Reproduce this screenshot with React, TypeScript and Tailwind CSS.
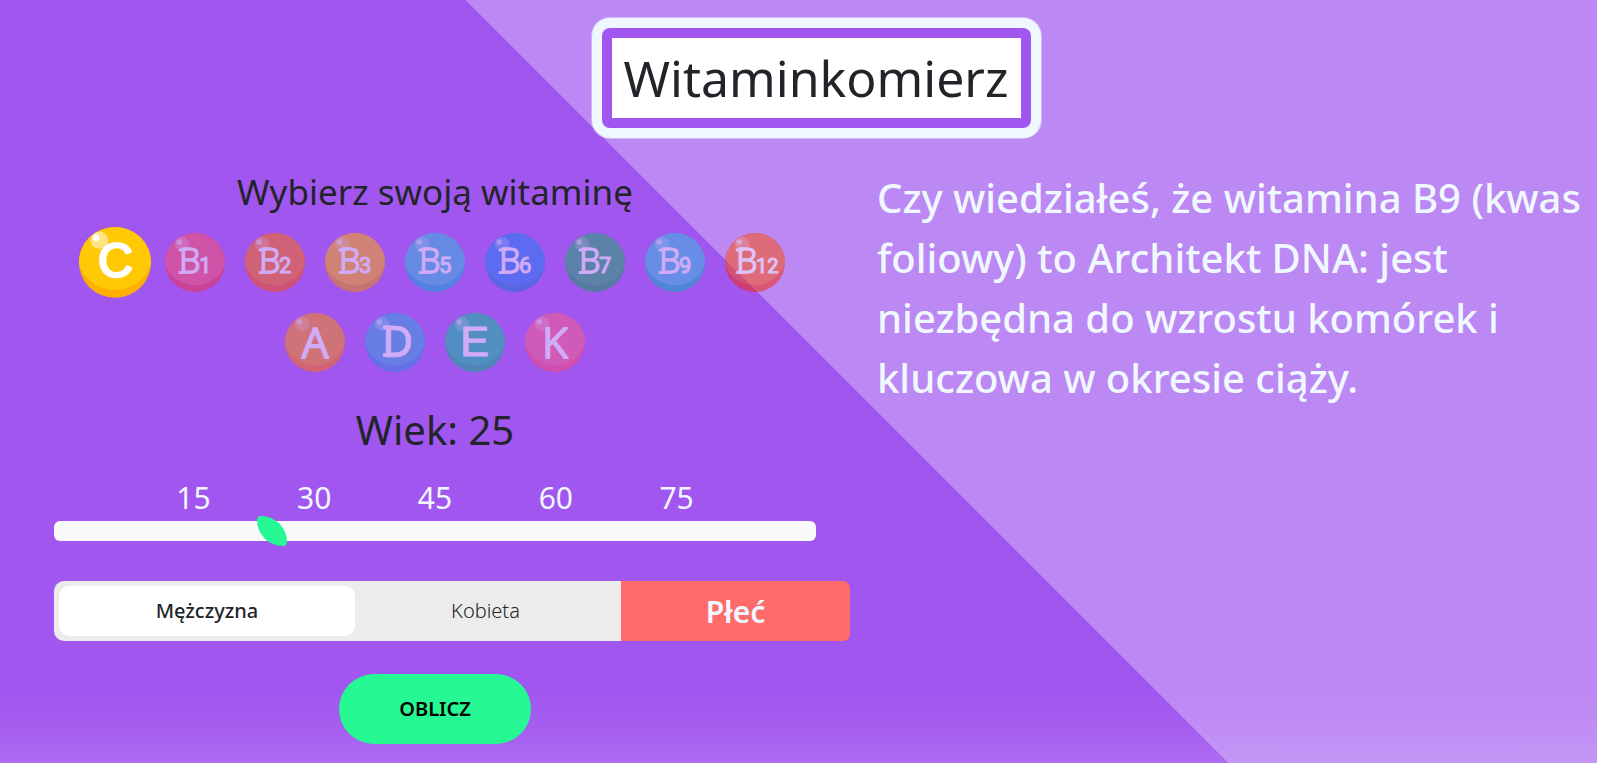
import { useState } from 'react';

type Vitamin = {
  letter: string;
  sub?: string;
  light: string;
  dark: string;
};

const vitamins: Vitamin[] = [
  { letter: 'C', light: '#ffc906', dark: '#ffaf00' },
  { letter: 'B', sub: '1', light: '#fd5463', dark: '#ef3041' },
  { letter: 'B', sub: '2', light: '#ff6e01', dark: '#fd4e00' },
  { letter: 'B', sub: '3', light: '#ffae00', dark: '#ed9000' },
  { letter: 'B', sub: '5', light: '#2fbedd', dark: '#0bacd9' },
  { letter: 'B', sub: '6', light: '#1980ef', dark: '#1576d5' },
  { letter: 'B', sub: '7', light: '#19ae65', dark: '#0f9c57' },
  { letter: 'B', sub: '9', light: '#2fc4e1', dark: '#03b6c1' },
  { letter: 'B', sub: '12', light: '#fe5000', dark: '#f62600' },
  { letter: 'A', light: '#ff9005', dark: '#ff7200' },
  { letter: 'D', light: '#2fa8db', dark: '#2b8ae1' },
  { letter: 'E', light: '#03c899', dark: '#00b681' },
  { letter: 'K', light: '#ff5e81', dark: '#ff4871' },
];

const ages = [15, 30, 45, 60, 75];

function Letter({ letter, sub }: { letter: string; sub?: string }) {
  if (sub) {
    const wide = sub.length > 1;
    const x = wide ? 11 : 14;
    return (
      <>
        <text x={x} y="40" strokeWidth="1.4" className="font-['Noto_Sans'] text-[34px] font-light">
          B
        </text>
        <path d={`M${x + 1} 17h5M${x + 1} 39.6h5`} strokeWidth="3" />
        <text
          x={wide ? 31 : 34}
          y="40"
          strokeWidth="1"
          className={wide ? "font-['Roboto'] text-[20px]" : "font-['Roboto'] text-[22px]"}
        >
          {sub}
        </text>
      </>
    );
  }
  if (letter === 'D') {
    return (
      <>
        <text x="18" y="42.5" strokeWidth="2.6" className="font-['Noto_Sans'] text-[41px] font-light">
          D
        </text>
        <path d="M19.5 14.2h5M19.5 42h5" strokeWidth="4" />
      </>
    );
  }
  if (letter === 'C') {
    return (
      <text x="30.5" y="42" textAnchor="middle" strokeWidth="2" className="font-['Liberation_Sans'] text-[40px]">
        C
      </text>
    );
  }
  if (letter === 'E') {
    return (
      <text x="29.5" y="42.5" textAnchor="middle" strokeWidth="1.2" className="font-['Liberation_Sans'] text-[43px]">
        E
      </text>
    );
  }
  return (
    <text x="30" y="44.5" textAnchor="middle" strokeWidth="2.2" className="font-['Noto_Sans'] text-[43px] font-light">
      {letter}
    </text>
  );
}

function VitaminIcon({ letter, sub, light, dark }: Vitamin) {
  const id = `clip-${letter}${sub ?? ''}`;
  const shiny = letter === 'C';
  return (
    <svg viewBox="0 0 60 60" className="block size-full overflow-visible" aria-hidden="true">
      <clipPath id={id}>
        <ellipse cx="30" cy="29.5" rx="30" ry="29.5" />
      </clipPath>
      <g clipPath={`url(#${id})`}>
        <rect width="60" height="60" fill={dark} />
        <ellipse cx="30" cy="23.5" rx="31" ry="28.8" fill={light} />
      </g>
      <circle cx="17" cy="11" r="7.2" fill="#fff" opacity={shiny ? 0.5 : 0.25} />
      <circle cx="14.3" cy="9" r="2.8" fill="#fff" opacity={shiny ? 0.95 : 0.55} />
      <g fill="#fff" stroke="#fff" strokeLinejoin="round" strokeLinecap="round">
        <Letter letter={letter} sub={sub} />
      </g>
    </svg>
  );
}

export default function App() {
  const [selected, setSelected] = useState('C');
  const [age, setAge] = useState(25);
  const [gender, setGender] = useState('m');

  return (
    <div className="flex min-h-screen flex-col overflow-x-hidden bg-[linear-gradient(to_top,rgba(255,255,255,0.13)_0px,rgba(255,255,255,0.05)_30px,rgba(255,255,255,0)_75px),linear-gradient(45deg,#a156ef_calc(50%_+_34px),#bc88f4_calc(50%_+_34px))] font-['Noto_Sans',sans-serif] text-[#212529]">
      <header className="flex justify-center pt-[18px] pl-[35px]">
        <div className="rounded-[18px] bg-[#f0f8ff] p-[10px] ring-1 ring-[#f0f8ff]/40">
          <div className="rounded-[8px] bg-[#a156ef] p-[10px]">
            <h1 className="bg-white px-3 py-[10px] text-[50px] leading-[60px]">Witaminkomierz</h1>
          </div>
        </div>
      </header>

      <main className="grid grid-cols-[127fr_120fr] gap-[61px] pt-[30px] pb-4 pl-[54px]">
        <section className="flex flex-col">
          <h2 className="text-center text-[35px] leading-[48px]">Wybierz swoją witaminę</h2>

          <div className="mt-[7px] flex flex-wrap justify-center px-5">
            {vitamins.map((v) => {
              const name = `${v.letter}${v.sub ?? ''}`;
              return (
                <button
                  key={name}
                  type="button"
                  aria-label={`Witamina ${name}`}
                  aria-pressed={selected === name}
                  onClick={() => setSelected(name)}
                  className={selected === name ? 'm-[10px] size-[60px] scale-120' : 'm-[10px] size-[60px] opacity-50'}
                >
                  <VitaminIcon {...v} />
                </button>
              );
            })}
          </div>

          <label htmlFor="age" className="mt-[17px] text-center text-[40px] leading-[60px]">
            Wiek: {age}
          </label>
          <div className="mt-[15px] flex px-[79px] pb-px text-[30px] leading-[45px] text-[#f0f8ff]">
            {ages.map((a) => (
              <span key={a} className="flex-1 text-center">
                {a}
              </span>
            ))}
          </div>
          <input
            id="age"
            type="range"
            min={0}
            max={90}
            value={age}
            onChange={(e) => setAge(Number(e.target.value))}
            className="h-5 w-full appearance-none rounded-[6px] bg-[#f8f9fa] [&::-webkit-slider-thumb]:size-[30px] [&::-webkit-slider-thumb]:appearance-none [&::-webkit-slider-thumb]:rounded-[4px_26px_4px_26px] [&::-webkit-slider-thumb]:bg-[#26f893]"
          />

          <div
            role="group"
            aria-labelledby="gender-label"
            className="mt-10 -mr-[34px] flex h-[60px] overflow-hidden rounded-[7px] rounded-l-[10px]"
          >
            <div className="flex flex-1 bg-[#ececec] p-[5px] text-[20px]">
              <button
                type="button"
                aria-pressed={gender === 'm'}
                onClick={() => setGender('m')}
                className={
                  gender === 'm'
                    ? 'w-[296px] rounded-[10px] bg-white font-medium'
                    : 'w-[296px] rounded-[10px] font-light'
                }
              >
                Mężczyzna
              </button>
              <button
                type="button"
                aria-pressed={gender === 'k'}
                onClick={() => setGender('k')}
                className={gender === 'k' ? 'flex-1 rounded-[10px] bg-white font-medium' : 'flex-1 rounded-[10px] font-light'}
              >
                Kobieta
              </button>
            </div>
            <span
              id="gender-label"
              className="flex w-[229px] items-center justify-center bg-[#ff6b6b] text-[30px] font-semibold text-[#f0f8ff]"
            >
              Płeć
            </span>
          </div>

          <button
            type="button"
            className="mt-[33px] h-[70px] w-48 self-center rounded-full bg-[#26f893] text-[20px] font-semibold text-black"
          >
            OBLICZ
          </button>
        </section>

        <p className="text-[40px] leading-[60px] font-medium text-[#f0f8ff]">
          Czy wiedziałeś, że witamina B9 (kwas foliowy) to Architekt DNA: jest niezbędna do wzrostu komórek i kluczowa w
          okresie ciąży.
        </p>
      </main>
    </div>
  );
}
